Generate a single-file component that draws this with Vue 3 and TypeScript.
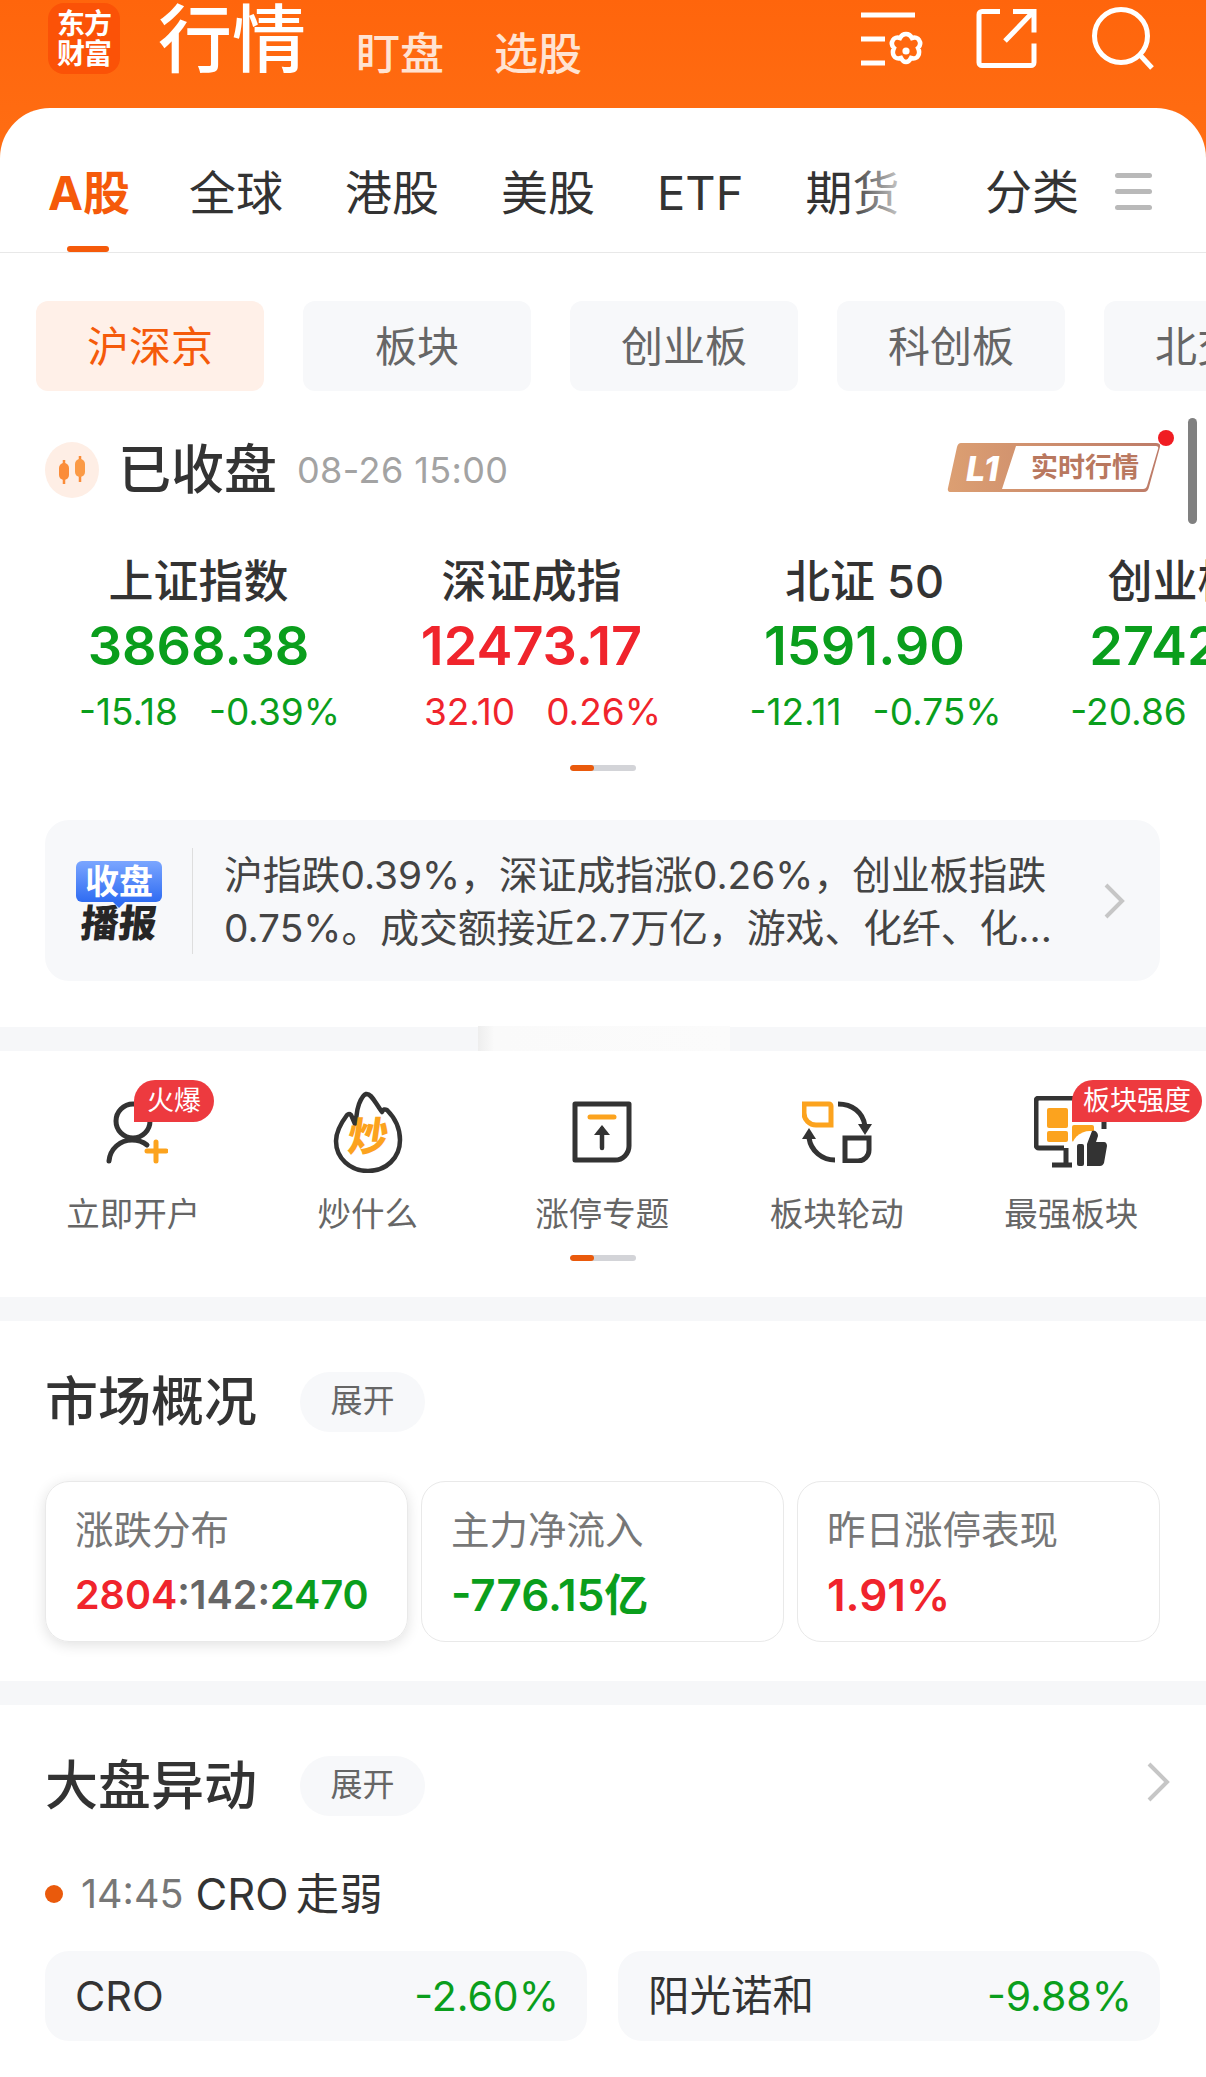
<script setup lang="ts">
interface IndexItem {
  name: string
  value: string
  change: string
  percent: string
  up: boolean
}

const tabs = ['全球', '港股', '美股', 'ETF', '期货']
const chips = ['沪深京', '板块', '创业板', '科创板', '北交所']

const indexes: IndexItem[] = [
  { name: '上证指数', value: '3868.38', change: '-15.18', percent: '-0.39%', up: false },
  { name: '深证成指', value: '12473.17', change: '32.10', percent: '0.26%', up: true },
  { name: '北证 50', value: '1591.90', change: '-12.11', percent: '-0.75%', up: false },
  { name: '创业板指', value: '2742.53', change: '-20.86', percent: '-0.75%', up: false }
]
</script>

<template>
  <div class="page">
    <div class="top">
      <header class="head">
        <div class="logo"><span>东方</span><span>财富</span></div>
        <div class="title">行情</div>
        <div class="sub">盯盘</div>
        <div class="sub">选股</div>
        <svg class="head-icons" width="300" height="70" viewBox="860 0 300 70" fill="none" stroke="#fff" stroke-width="5">
          <path d="M861 15h54M861 39h24M861 63h24" />
          <path d="M906 34c3 0 5 2 6 4 3-1 6 0 7 2 2 3 1 6-1 8 1 2 2 5 0 8-1 2-4 3-7 2-1 2-3 4-5 4s-4-2-5-4c-3 1-6 0-7-2-2-3-1-6 0-8-2-2-3-5-1-8 1-2 4-3 7-2 1-2 3-4 6-4z" stroke-width="4.5" />
          <circle cx="906" cy="51" r="3.6" fill="#fff" stroke="none" />
          <path d="M1000 11.5h-18a3 3 0 0 0-3 3v48a3 3 0 0 0 3 3h49a3 3 0 0 0 3-3v-19M1005 41l28-29M1013 11.5h21v21" />
          <circle cx="1121" cy="36" r="26.5" />
          <path d="M1140 55l12 13" />
        </svg>
      </header>

      <nav class="tabs">
        <div class="tab active">A股<i class="tab-line"></i></div>
        <div v-for="tab in tabs" :key="tab" class="tab">{{ tab }}</div>
        <div class="tab-fade"></div>
        <div class="tab cat">分类</div>
        <div class="menu"><i></i><i></i><i></i></div>
      </nav>
    </div>

    <div class="chips">
      <div v-for="(chip, i) in chips" :key="chip" class="chip" :class="{ on: i === 0 }">{{ chip }}</div>
    </div>

    <div class="status">
      <svg class="candle" width="54" height="56" viewBox="0 0 54 56">
        <ellipse cx="27" cy="28" rx="27" ry="28" fill="#feeee5" />
        <path d="M19 18v5M19 37v5M35 14v5M35 34v6" stroke="#fb8c38" stroke-width="2.5" />
        <rect x="14" y="21" width="10" height="17" rx="5" fill="#fb8c38" />
        <rect x="30" y="17" width="10" height="18" rx="5" fill="#fb9a45" />
      </svg>
      <div class="closed">已收盘</div>
      <div class="time">08-26 15:00</div>
      <svg class="l1" width="232" height="64" viewBox="0 0 232 64">
        <defs>
          <linearGradient id="l1g" x1="0" x2="1" y1="0" y2="0">
            <stop offset="0" stop-color="#dc9f72" />
            <stop offset="1" stop-color="#bd7b68" />
          </linearGradient>
        </defs>
        <path d="M12 13h197q5 0 4 4l-11 40q-1 5-5 5H4q-4 0-3-4l9-41q1-4 4-4z" fill="url(#l1g)" />
        <path d="M69 16h140q3 0 2 3l-11 37q-1 3-4 3H55z" fill="#fff" />
        <text x="19" y="51" class="l1-l">L1</text>
        <text x="84" y="47" class="l1-t">实时行情</text>
        <circle cx="219" cy="8" r="8" fill="#f01c22" />
      </svg>
      <i class="scroll"></i>
    </div>

    <div class="indexes">
      <div v-for="item in indexes" :key="item.name" class="index">
        <div class="index-name">{{ item.name }}</div>
        <div class="index-value" :class="item.up ? 'red' : 'green'">{{ item.value }}</div>
        <div class="index-change" :class="item.up ? 'red' : 'green'">
          <span>{{ item.change }}</span>
          <span>{{ item.percent }}</span>
        </div>
      </div>
    </div>
    <div class="dots"><i></i></div>

    <div class="news">
      <div class="news-badge">
        <div class="bubble">收盘</div>
        <div class="report">播报</div>
      </div>
      <div class="news-text">
        沪指跌0.39%，深证成指涨0.26%，创业板指跌<br />0.75%。成交额接近2.7万亿，游戏、化纤、化...
      </div>
      <svg class="chev news-chev" width="22" height="36" viewBox="0 0 22 36" fill="none">
        <path d="M3 2l16 16L3 34" />
      </svg>
    </div>

    <div class="band first-band"><i class="band-gap"></i></div>

    <div class="features">
      <div class="feature">
        <div class="feature-icon">
          <svg width="70" height="82" viewBox="96 1090 70 82" fill="none" stroke="#333" stroke-width="5" stroke-linecap="round">
            <circle cx="131" cy="1120" r="17" />
            <path d="M107 1160c1-12 11-21 23-21 5 0 10 1 15 5" />
            <path d="M154 1141v19M145 1150h19" stroke="#fca31e" />
          </svg>
          <span class="tag hot">火爆</span>
        </div>
        <div class="feature-name">立即开户</div>
      </div>
      <div class="feature">
        <div class="feature-icon">
          <svg width="70" height="82" viewBox="0 0 70 82" fill="none" stroke="#333" stroke-width="4.5" stroke-linejoin="round">
            <path d="M33 3c5-1 8 7 16 18 1-3 3-3 5-2 8 8 13 18 13 30 0 18-14 31-32 31S3 67 3 50c0-10 5-18 11-26 2-2 4-1 5 2l3 7c2-6 1-12 4-20 2-5 4-9 7-10z" />
          </svg>
          <span class="chao">炒</span>
        </div>
        <div class="feature-name">炒什么</div>
      </div>
      <div class="feature">
        <div class="feature-icon">
          <svg width="60" height="62" viewBox="0 0 60 62" fill="none" stroke="#333" stroke-width="5" stroke-linecap="round">
            <path d="M3 3h54v42a14 14 0 0 1-14 14H3z" stroke-linejoin="round" />
            <path d="M18 16h24" stroke="#fca31e" stroke-width="5" />
            <path d="M30 47V28" stroke-width="4.5" />
            <path d="M30 24l8 10H22z" fill="#333" stroke="none" />
          </svg>
        </div>
        <div class="feature-name">涨停专题</div>
      </div>
      <div class="feature">
        <div class="feature-icon">
          <svg width="70" height="62" viewBox="0 0 70 62" fill="none" stroke="#333" stroke-width="5">
            <path d="M3 3h24a2 2 0 0 1 2 2v19H14A12 12 0 0 1 2 12V3z" stroke="#fca31e" />
            <path d="M43 37h24v12a11 11 0 0 1-11 11H43z" />
            <path d="M36 3c14 0 25 8 27 22" />
            <path d="M63 34l-7-11h14z" fill="#333" stroke="none" />
            <path d="M33 59C20 59 9 50 7 37" />
            <path d="M7 27l7 11H0z" fill="#333" stroke="none" />
          </svg>
        </div>
        <div class="feature-name">板块轮动</div>
      </div>
      <div class="feature">
        <div class="feature-icon">
          <svg width="74" height="72" viewBox="0 0 74 72" fill="none" stroke="#333" stroke-width="5">
            <path d="M30 52H5a3 3 0 0 1-3-3V5a3 3 0 0 1 3-3h62a3 3 0 0 1 3 3v28" />
            <path d="M18 69h20M32 52v17" />
            <rect x="13" y="12" width="21" height="20" rx="2" fill="#fca31e" stroke="none" />
            <rect x="13" y="35" width="21" height="11" rx="2" fill="#fca31e" stroke="none" />
            <rect x="38" y="29" width="22" height="17" rx="2" fill="#fca31e" stroke="none" />
            <circle cx="56" cy="54" r="19" fill="#fff" stroke="none" />
            <rect x="43" y="48" width="7" height="22" rx="2" fill="#333" stroke="none" />
            <path d="M53 48l5-13c3-1 6 1 6 5l-2 6h8c2 0 3 2 3 4l-3 17c-1 2-2 3-4 3H53z" fill="#333" stroke="none" />
          </svg>
          <span class="tag strong">板块强度</span>
        </div>
        <div class="feature-name">最强板块</div>
      </div>
    </div>
    <div class="dots feature-dots"><i></i></div>

    <div class="band feature-band"></div>

    <section class="market">
      <div class="sec-head">
        <h2>市场概况</h2>
        <span class="pill">展开</span>
      </div>
      <div class="cards">
        <div class="card focus">
          <div class="card-label">涨跌分布</div>
          <div class="card-value"><span class="red">2804</span><span class="gray">:142:</span><span class="green">2470</span></div>
        </div>
        <div class="card">
          <div class="card-label">主力净流入</div>
          <div class="card-value green">-776.15亿</div>
        </div>
        <div class="card">
          <div class="card-label">昨日涨停表现</div>
          <div class="card-value red">1.91%</div>
        </div>
      </div>
    </section>

    <div class="band market-band"></div>

    <section class="moves">
      <div class="sec-head">
        <h2>大盘异动</h2>
        <span class="pill">展开</span>
        <svg class="chev sec-chev" width="24" height="40" viewBox="0 0 24 40" fill="none">
          <path d="M3 2l18 18L3 38" />
        </svg>
      </div>
      <div class="event">
        <i class="event-dot"></i>
        <span class="event-time">14:45</span>
        <span class="event-text">CRO 走弱</span>
      </div>
      <div class="stocks">
        <div class="stock"><span>CRO</span><span class="green">-2.60%</span></div>
        <div class="stock"><span>阳光诺和</span><span class="green">-9.88%</span></div>
      </div>
    </section>
  </div>
</template>

<style scoped>
.page {
  position: relative;
  width: 1206px;
  height: 2077px;
  overflow: hidden;
  background: #fff;
  color: #333;
  font-family: Inter, "Noto Sans CJK SC", sans-serif;
}

.red { color: #f0242c; }
.green { color: #0a9e1c; }
.gray { color: #666; }

.top {
  background: linear-gradient(180deg, #ff650c 0%, #ff7318 100%);
}

.head {
  position: relative;
  display: flex;
  align-items: flex-start;
  height: 108px;
  padding-left: 48px;
}

.logo {
  display: flex;
  flex-direction: column;
  align-items: center;
  justify-content: center;
  width: 72px;
  height: 71px;
  margin-top: 3px;
  border-radius: 16px;
  background: #fb5207;
  color: #fff;
  font-size: 28px;
  font-weight: 700;
  line-height: 30px;
  letter-spacing: -1px;
}

.title {
  margin: 0 0 0 38px;
  color: #fff;
  font-size: 74px;
  font-weight: 500;
  line-height: 78px;
}

.sub {
  margin: 24px 0 0 50px;
  color: #ffe3d2;
  font-size: 44px;
  font-weight: 500;
  line-height: 60px;
}

.head-icons {
  position: absolute;
  left: 860px;
  top: 0;
}

.tabs {
  position: relative;
  display: flex;
  align-items: center;
  gap: 62px;
  height: 126px;
  padding: 18px 0 0 48px;
  border-bottom: 1px solid #e8e8e8;
  border-radius: 50px 50px 0 0;
  background: #fff;
}

.tab {
  position: relative;
  top: 4px;
  color: #333;
  font-size: 47px;
  line-height: 60px;
  white-space: nowrap;
}

.tab.active {
  margin-right: -3px;
  color: #f55a0a;
  font-weight: 700;
}

.tab-line {
  position: absolute;
  left: 19px;
  bottom: -29px;
  width: 42px;
  height: 6px;
  border-radius: 3px;
  background: #f55a0a;
}

.tab-fade {
  position: absolute;
  left: 848px;
  top: 40px;
  width: 60px;
  height: 80px;
  background: linear-gradient(90deg, rgba(255, 255, 255, 0), rgba(255, 255, 255, 0.85));
}

.tab.cat {
  position: absolute;
  left: 985px;
  top: 54px;
}

.menu {
  position: absolute;
  left: 1115px;
  top: 65px;
  display: flex;
  flex-direction: column;
  gap: 11px;
}

.menu i {
  display: block;
  width: 37px;
  height: 5px;
  border-radius: 3px;
  background: #b9b9b9;
}

.chips {
  display: flex;
  gap: 39px;
  padding: 48px 0 0 36px;
}

.chip {
  flex: none;
  width: 228px;
  height: 90px;
  border-radius: 12px;
  background: #f7f8fa;
  color: #666;
  font-size: 42px;
  line-height: 92px;
  text-align: center;
}

.chip.on {
  background: #fff0e8;
  color: #f55a0a;
}

.status {
  position: relative;
  display: flex;
  align-items: center;
  height: 56px;
  margin-top: 51px;
  padding-left: 45px;
}

.closed {
  margin-left: 19px;
  font-size: 53px;
  font-weight: 500;
  line-height: 56px;
}

.time {
  margin-left: 20px;
  color: #a3a3a3;
  font-size: 36px;
  letter-spacing: 0.4px;
}

.l1 {
  position: absolute;
  left: 947px;
  top: -12px;
}

.l1-l {
  fill: #fff;
  font-size: 34px;
  font-weight: 800;
  font-style: italic;
}

.l1-t {
  fill: #b9785f;
  font-size: 27px;
  font-weight: 700;
}

.scroll {
  position: absolute;
  left: 1188px;
  top: -24px;
  width: 9px;
  height: 106px;
  border-radius: 5px;
  background: #808080;
}

.indexes {
  display: flex;
  margin-top: 58px;
  padding-left: 32px;
}

.index {
  flex: none;
  width: 333px;
  text-align: center;
}

.index-name {
  font-size: 45px;
  font-weight: 500;
  line-height: 52px;
}

.index-value {
  margin-top: 8px;
  font-size: 54px;
  font-weight: 600;
  line-height: 60px;
  white-space: nowrap;
}

.index-change {
  display: flex;
  justify-content: center;
  gap: 31px;
  margin-top: 14px;
  padding-left: 22px;
  font-size: 37px;
  line-height: 44px;
}

.dots {
  position: relative;
  width: 66px;
  height: 6px;
  margin: 31px auto 0;
  border-radius: 3px;
  background: #d3d4d8;
  overflow: hidden;
}

.dots i {
  display: block;
  width: 24px;
  height: 6px;
  border-radius: 3px;
  background: #ea5a0c;
}

.news {
  position: relative;
  display: flex;
  align-items: center;
  height: 161px;
  margin: 49px 46px 0 45px;
  border-radius: 24px;
  background: #f7f8fa;
}

.news-badge {
  flex: none;
  width: 86px;
  margin-left: 31px;
  text-align: center;
}

.bubble {
  position: relative;
  height: 41px;
  border-radius: 6px;
  background: linear-gradient(180deg, #7ba6ff, #2f6cf2);
  color: #fff;
  font-size: 34px;
  font-weight: 700;
  line-height: 41px;
}

.bubble::after {
  content: "";
  position: absolute;
  left: 37px;
  bottom: -6px;
  border-left: 6px solid transparent;
  border-right: 6px solid transparent;
  border-top: 6px solid #2f6cf2;
}

.report {
  margin-top: 3px;
  color: #262626;
  font-size: 38px;
  font-weight: 900;
  line-height: 36px;
  transform: skewX(-6deg);
}

.news-text {
  flex: 1;
  margin-left: 30px;
  padding-left: 31px;
  border-left: 1px solid #dedede;
  color: #444;
  font-size: 38.8px;
  line-height: 53px;
  white-space: nowrap;
}

.chev path {
  stroke: #c6c6c6;
  stroke-width: 4;
}

.news-chev {
  position: absolute;
  left: 1058px;
  top: 63px;
}

.band {
  position: relative;
  height: 24px;
  background: #f6f7f9;
}

.band-gap {
  position: absolute;
  left: 478px;
  top: -1px;
  width: 252px;
  height: 25px;
  background: linear-gradient(90deg, #eeeeee 0, #f5f5f5 10px, #fafafa 16px, #fbfbfb 100%);
}

.first-band { margin-top: 46px; }
.feature-band { margin-top: 36px; }
.market-band { margin-top: 39px; }

.features {
  display: grid;
  grid-template-columns: repeat(5, 234.5px);
  padding: 29px 0 0 16px;
}

.feature {
  position: relative;
  text-align: center;
}

.feature-icon {
  position: relative;
  top: 4px;
  display: flex;
  align-items: center;
  justify-content: center;
  height: 95px;
}

.feature-name {
  margin-top: 17px;
  color: #666;
  font-size: 33.5px;
  line-height: 44px;
}

.tag {
  position: absolute;
  top: -4px;
  height: 42px;
  border-radius: 21px 21px 21px 0;
  background: #ed3a3f;
  color: #fff;
  font-size: 27px;
  line-height: 42px;
  text-align: center;
}

.hot {
  left: 118px;
  width: 80px;
}

.strong {
  left: 118px;
  width: 130px;
}

.chao {
  position: absolute;
  left: 97px;
  top: 26px;
  color: #fca31e;
  font-size: 40px;
  font-weight: 900;
  line-height: 54px;
  transform: skewX(-8deg);
}

.feature-dots {
  margin-top: 19px;
}

.market,
.moves {
  padding: 51px 46px 0 45px;
}

.sec-head {
  position: relative;
  display: flex;
  align-items: center;
  gap: 43px;
  height: 60px;
}

.sec-head h2 {
  margin: 0;
  font-size: 53px;
  font-weight: 500;
  line-height: 60px;
}

.pill {
  width: 125px;
  height: 60px;
  border-radius: 30px;
  background: #f7f8fa;
  color: #666;
  font-size: 32px;
  line-height: 58px;
  text-align: center;
}

.cards {
  display: grid;
  grid-template-columns: 363px 363px 363px;
  gap: 13px;
  margin-top: 49px;
}

.card {
  box-sizing: border-box;
  height: 161px;
  padding: 23px 0 0 29px;
  border: 1px solid #e9e9e9;
  border-radius: 24px;
}

.card.focus {
  box-shadow: 0 3px 14px rgba(0, 0, 0, 0.12);
}

.card-label {
  color: #777;
  font-size: 38.5px;
  line-height: 50px;
}

.card-value {
  margin-top: 15px;
  font-size: 44px;
  font-weight: 600;
  line-height: 50px;
  white-space: nowrap;
}

.focus .card-value {
  font-size: 39.5px;
}

.sec-chev {
  position: absolute;
  left: 1101px;
  top: 6px;
}

.event {
  display: flex;
  align-items: center;
  height: 50px;
  margin-top: 53px;
}

.event-dot {
  width: 18px;
  height: 18px;
  border-radius: 50%;
  background: #ea5a0c;
}

.event-time {
  margin-left: 18px;
  color: #777;
  font-size: 39.5px;
  line-height: 50px;
}

.event-text {
  margin-left: 12px;
  font-size: 43.5px;
  line-height: 50px;
  word-spacing: -5px;
}

.stocks {
  display: flex;
  gap: 31px;
  margin: 32px 0 0;
}

.stock {
  display: flex;
  flex: none;
  align-items: center;
  justify-content: space-between;
  box-sizing: border-box;
  width: 542px;
  height: 90px;
  padding: 0 28px 0 30px;
  border-radius: 24px;
  background: #f7f8fa;
  font-size: 41.5px;
  line-height: 50px;
}

.stock .green {
  font-size: 41px;
}
</style>

<style>
body {
  background: #fff;
}
</style>
